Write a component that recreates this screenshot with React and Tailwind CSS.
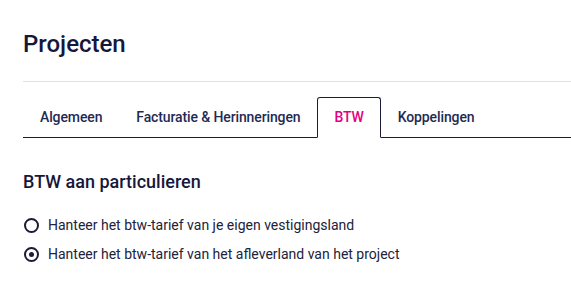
import { useState } from 'react';

const tabs = ['Algemeen', 'Facturatie & Herinneringen', 'BTW', 'Koppelingen'];

const options = [
    { id: 'eigen', label: 'Hanteer het btw-tarief van je eigen vestigingsland' },
    { id: 'aflever', label: 'Hanteer het btw-tarief van het afleverland van het project' },
];

const Radio = ({ checked }) => (
    <span className="w-[15px] h-[15px] rounded-full border-2 border-[#1b1b3a] flex items-center justify-center shrink-0">
        {checked && <span className="w-[5px] h-[5px] rounded-full bg-[#1b1b3a]" />}
    </span>
);

const App = () => {
    const [active, setActive] = useState('BTW');
    const [choice, setChoice] = useState('aflever');

    return (
        <div className="min-h-screen bg-white pl-[23px] pt-[28px] font-['Roboto',sans-serif]">
            <h1 className="text-[24px] leading-[32px] font-medium text-[#17173a]">Projecten</h1>

            <div className="mt-[21px] border-t border-[#e2e2e2]" />

            {/* Tabs */}
            <div className="mt-[15px] flex border-b border-[#1b1b3a]">
                {tabs.map((t) => (
                    <button
                        key={t}
                        onClick={() => setActive(t)}
                        className={
                            t === active
                                ? '-mb-px h-[41px] px-4 border border-[#1b1b3a] border-b-white rounded-t-[3px] text-[14px] tracking-[-0.12px] font-medium text-[#e6007e] bg-white'
                                : '-mb-px h-[41px] px-4 border border-transparent text-[14px] tracking-[-0.12px] font-medium text-[#1f2a52]'
                        }
                    >
                        {t}
                    </button>
                ))}
            </div>

            <h2 className="mt-[32px] text-[18px] leading-[24px] font-medium text-[#17173a]">BTW aan particulieren</h2>

            <div className="mt-[21px] flex flex-col gap-[9px]">
                {options.map((o) => (
                    <label key={o.id} onClick={() => setChoice(o.id)} className="flex items-center h-[20px] cursor-pointer">
                        <span className="ml-px">
                            <Radio checked={choice === o.id} />
                        </span>
                        <span className="ml-[9px] text-[14px] leading-[20px] text-[#22223a]">{o.label}</span>
                    </label>
                ))}
            </div>
        </div>
    );
};

export default App;
